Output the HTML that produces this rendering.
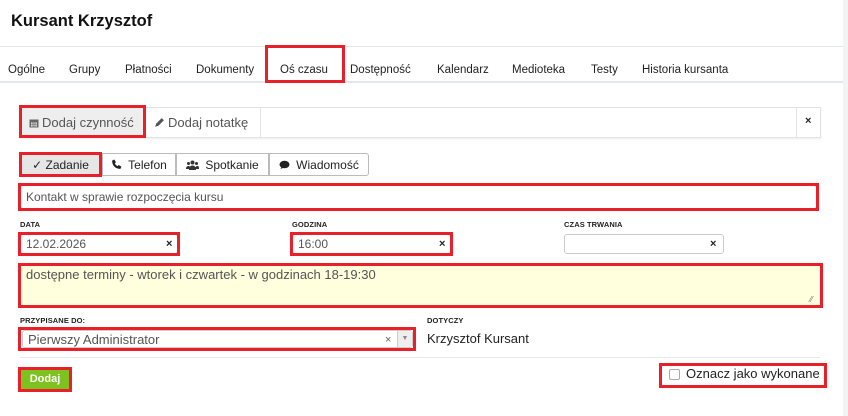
<!DOCTYPE html>
<html><head><meta charset="utf-8">
<style>
*{box-sizing:border-box;margin:0;padding:0}
body{width:848px;height:416px;background:#fff;font-family:"Liberation Sans",sans-serif;color:#222;position:relative;overflow:hidden}
.a{position:absolute}
.red{position:absolute;border:3px solid #e8202a}
.lbl{position:absolute;font-size:7.5px;font-weight:bold;color:#222;letter-spacing:0.1px}
.inp{position:absolute;border:1px solid #ccc;border-radius:3px;background:#fff;font-size:12px;color:#555}
.x{position:absolute;font-size:11px;font-weight:bold;color:#222}
.tab{position:absolute;top:64px;font-size:11.5px;color:#222}
.btn{position:absolute;top:153px;height:23px;border:1px solid #bbb;background:#fff;font-size:12px;color:#222;display:flex;align-items:center;justify-content:center;gap:6px}
</style></head><body>
<div class="a" style="right:0;top:0;width:5px;height:416px;background:#f2f3f5"></div>
<div class="a" style="left:11px;top:12px;font-size:16.5px;font-weight:bold;color:#111">Kursant Krzysztof</div>
<div class="a" style="left:0;top:46px;width:843px;height:1px;background:#e3e6ea"></div>
<div class="a" style="left:0;top:81px;width:843px;height:2px;background:#e3e6ea"></div>
<div class="tab" style="left:8px">Ogólne</div>
<div class="tab" style="left:69px">Grupy</div>
<div class="tab" style="left:125px">Płatności</div>
<div class="tab" style="left:196px">Dokumenty</div>
<div class="tab" style="left:280px">Oś czasu</div>
<div class="tab" style="left:350px">Dostępność</div>
<div class="tab" style="left:437px">Kalendarz</div>
<div class="tab" style="left:512px">Medioteka</div>
<div class="tab" style="left:591px">Testy</div>
<div class="tab" style="left:642px">Historia kursanta</div>
<div class="red" style="left:265px;top:45px;width:80px;height:38px"></div>

<div class="a" style="left:20px;top:107px;width:801px;height:31px;border:1px solid #e3e3e3;box-shadow:0 1px 2px rgba(0,0,0,.08)"></div>
<div class="a" style="left:22px;top:108px;width:122px;height:29px;background:#eee"></div>
<div class="a" style="left:260px;top:108px;width:1px;height:29px;background:#e3e3e3"></div>
<div class="a" style="left:796px;top:108px;width:1px;height:29px;background:#e3e3e3"></div>
<div class="a" style="left:29px;top:115px;font-size:13px;color:#555;display:flex;align-items:center;gap:3px"><svg width="10" height="10" viewBox="0 0 10 10"><rect x="0.5" y="1.5" width="9" height="8" fill="#666"/><rect x="2" y="4" width="6" height="4.5" fill="#ddd"/><path d="M2 4h6M2 6.2h6M4 4v4.5M6 4v4.5" stroke="#666" stroke-width=".7"/></svg>Dodaj czynność</div>
<div class="a" style="left:154px;top:115px;font-size:13px;color:#555;display:flex;align-items:center;gap:3px"><svg width="11" height="11" viewBox="0 0 10 10"><path d="M1 9l1-3 5-5 2 2-5 5z" fill="#555"/></svg>Dodaj notatkę</div>
<div class="x" style="left:805px;top:115px">×</div>
<div class="red" style="left:19px;top:105px;width:127px;height:33px"></div>

<div class="btn" style="left:19px;width:83px;background:#e6e6e6;border-color:#aaa">✓ Zadanie</div>
<div class="btn" style="left:102px;width:74px"><svg width="11" height="11" viewBox="0 0 10 10"><path d="M1 1.5l2-1 1.5 2.5-1 1c.5 1.2 1.3 2 2.5 2.5l1-1 2.5 1.5-1 2C4 9 1 6 1 1.5z" fill="#222"/></svg>Telefon</div>
<div class="btn" style="left:176px;width:93px"><svg width="13" height="10" viewBox="0 0 13 10"><circle cx="6.5" cy="2.5" r="2" fill="#333"/><circle cx="2.5" cy="3.5" r="1.5" fill="#333"/><circle cx="10.5" cy="3.5" r="1.5" fill="#333"/><path d="M3 10c0-3 1.5-4.5 3.5-4.5S10 7 10 10zM0 9c0-2 1-3 2.5-3S4 7 4 9zM9 9c0-2 1-3 2.5-3S13 7 13 9z" fill="#333"/></svg>Spotkanie</div>
<div class="btn" style="left:269px;width:100px;border-radius:0 3px 3px 0"><svg width="11" height="10" viewBox="0 0 11 10"><ellipse cx="5.5" cy="4.5" rx="5" ry="3.8" fill="#222"/><path d="M1.5 9l1.5-3 2 1.5z" fill="#222"/></svg>Wiadomość</div>
<div class="red" style="left:19px;top:152px;width:83px;height:25px"></div>

<div class="inp" style="left:20px;top:185px;width:797px;height:24px;padding:4px 5px;font-size:12px">Kontakt w sprawie rozpoczęcia kursu</div>
<div class="red" style="left:18px;top:183px;width:801px;height:28px"></div>

<div class="lbl" style="left:20px;top:220px">DATA</div>
<div class="lbl" style="left:292px;top:220px">GODZINA</div>
<div class="lbl" style="left:564px;top:220px">CZAS TRWANIA</div>
<div class="inp" style="left:20px;top:234px;width:158px;height:20px;padding:2px 5px">12.02.2026</div>
<div class="x" style="left:166px;top:238px">×</div>
<div class="red" style="left:18px;top:232px;width:162px;height:24px"></div>
<div class="inp" style="left:292px;top:234px;width:159px;height:20px;padding:2px 5px">16:00</div>
<div class="x" style="left:439px;top:238px">×</div>
<div class="red" style="left:290px;top:232px;width:163px;height:24px"></div>
<div class="inp" style="left:564px;top:234px;width:160px;height:20px"></div>
<div class="x" style="left:710px;top:238px">×</div>

<div class="a" style="left:20px;top:265px;width:801px;height:41px;background:#ffffdd;font-size:13px;color:#555;padding:2px 6px">dostępne terminy - wtorek i czwartek - w godzinach 18-19:30</div>
<div class="a" style="left:810px;top:295px;font-size:8px;color:#777">⁄⁄</div>
<div class="red" style="left:18px;top:263px;width:805px;height:45px"></div>

<div class="lbl" style="left:20px;top:316px">PRZYPISANE DO:</div>
<div class="lbl" style="left:427px;top:316px">DOTYCZY</div>
<div class="inp" style="left:22px;top:330px;width:391px;height:18px;padding:1px 5px;font-size:13px">Pierwszy Administrator</div>
<div class="a" style="left:385px;top:334px;font-size:11px;color:#666">×</div>
<div class="a" style="left:397px;top:331px;width:15px;height:16px;background:#eee;border-left:1px solid #ccc;font-size:7px;color:#888;text-align:center;line-height:16px">▼</div>
<div class="red" style="left:18px;top:327px;width:398px;height:24px"></div>
<div class="a" style="left:427px;top:331px;font-size:13px;color:#222">Krzysztof Kursant</div>

<div class="a" style="left:20px;top:357px;width:800px;height:1px;background:#e8e8e8"></div>
<div class="a" style="left:21px;top:370px;width:48px;height:19px;background:#7dc21e;color:#fff;font-size:11px;font-weight:bold;text-align:center;line-height:19px">Dodaj</div>
<div class="red" style="left:18px;top:367px;width:54px;height:25px"></div>
<div class="a" style="left:669px;top:369px;width:11px;height:11px;border:1px solid #aaa;border-radius:2px"></div>
<div class="a" style="left:686px;top:366px;font-size:13px;color:#222">Oznacz jako wykonane</div>
<div class="red" style="left:659px;top:363px;width:168px;height:25px"></div>
</body></html>
